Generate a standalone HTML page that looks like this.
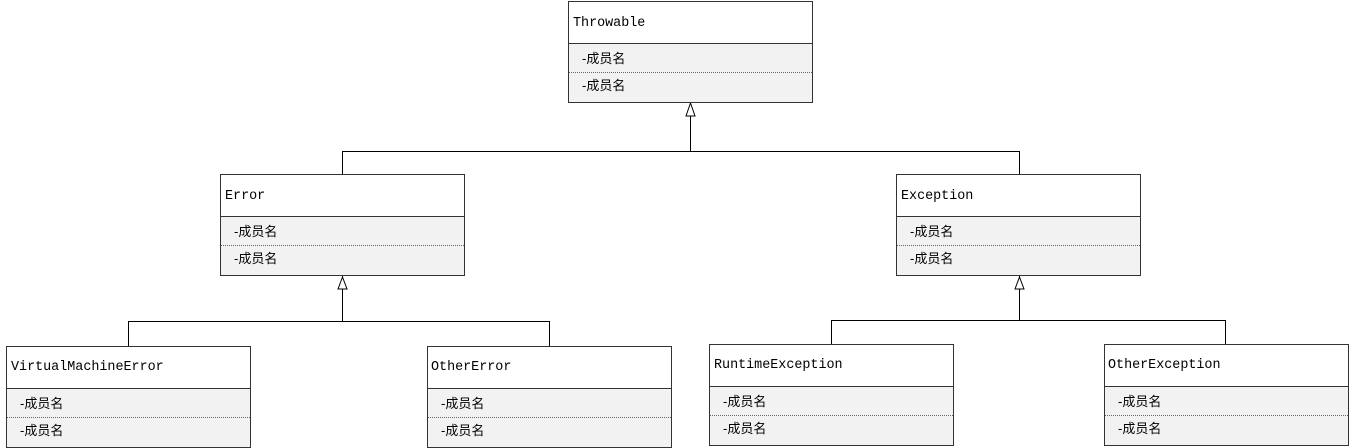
<!DOCTYPE html>
<html><head><meta charset="utf-8"><style>
html,body{margin:0;padding:0;background:#fff;width:1352px;height:448px;overflow:hidden}
text{font-family:"Liberation Mono","WenQuanYi Zen Hei",monospace;font-size:13.4px;fill:#000}
.m{font-family:"Liberation Sans","WenQuanYi Zen Hei",sans-serif;font-size:13px}
</style></head><body>
<svg width="1352" height="448" xmlns="http://www.w3.org/2000/svg" shape-rendering="crispEdges">
<defs>
<g id="box">
<rect x="0.5" y="0.5" width="244" height="101" fill="#f2f2f2" stroke="#333"/>
<rect x="1" y="1" width="243" height="41" fill="#fff"/>
<line x1="0" y1="42.5" x2="245" y2="42.5" stroke="#333"/>
<line x1="1" y1="71.5" x2="244" y2="71.5" stroke="#666" stroke-dasharray="1,1"/>
<text class="m" x="14" y="62">-成员名</text>
<text class="m" x="14" y="89">-成员名</text>
</g>
</defs>
<g fill="none" stroke="#000">
<path d="M690.5 102V151.5M342.5 174V151.5H1019.5V174"/>
<path d="M342.5 276V321.5M128.5 346V321.5H549.5V346"/>
<path d="M1019.5 276V320.5M831.5 344V320.5H1225.5V344"/>
</g>
<g fill="#fff" stroke="#000" shape-rendering="auto">
<path d="M690.5 103L686 116H695Z"/>
<path d="M342.5 277L338 289H347Z"/>
<path d="M1019.5 277L1015 289H1024Z"/>
</g>
<g transform="translate(568,1)"><use href="#box"/><text x="5" y="25">Throwable</text></g>
<g transform="translate(220,174)"><use href="#box"/><text x="5" y="25">Error</text></g>
<g transform="translate(896,174)"><use href="#box"/><text x="5" y="25">Exception</text></g>
<g transform="translate(6,346)"><use href="#box"/><text x="5" y="24">VirtualMachineError</text></g>
<g transform="translate(427,346)"><use href="#box"/><text x="4" y="24">OtherError</text></g>
<g transform="translate(709,344)"><use href="#box"/><text x="5" y="24">RuntimeException</text></g>
<g transform="translate(1104,344)"><use href="#box"/><text x="4" y="24">OtherException</text></g>
</svg>
</body></html>
